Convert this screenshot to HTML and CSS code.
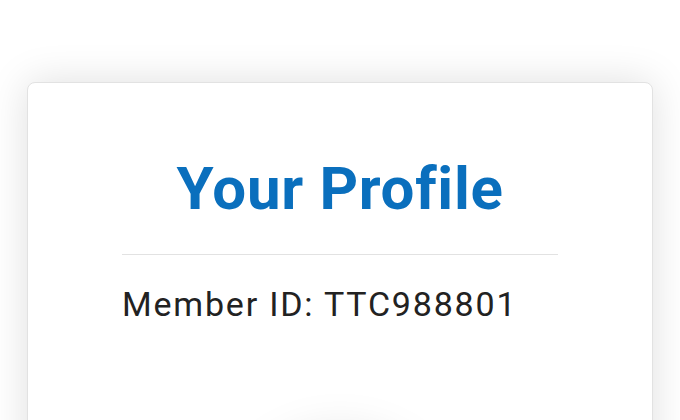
FILE: index.html
```html
<!DOCTYPE html>
<html lang="en">
<head>
    <meta charset="UTF-8">
    <meta name="viewport" content="width=device-width, initial-scale=1.0">
    <title>Your Profile</title>
    <link rel="stylesheet" href="styles.css">
</head>
<body>
    <div class="profile-card">
        <h1>Your Profile</h1>
        <div class="divider"></div>
        <p class="member-id">Member ID: TTC988801</p>
        <div class="avatar"></div>
    </div>
</body>
</html>
```

FILE: styles.css
```css
* {
    margin: 0;
    padding: 0;
    box-sizing: border-box;
}

body {
    font-family: Roboto, 'Liberation Sans', sans-serif;
    background-color: #ffffff;
    padding: 82px 27px 40px 27px;
}

.profile-card {
    background-color: white;
    border: 1px solid #e2e2e2;
    border-radius: 8px;
    box-shadow: 0 0 40px rgba(0, 0, 0, 0.13);
    padding: 71px 94px 40px;
    display: flex;
    flex-direction: column;
    align-items: stretch;
}

h1 {
    color: #0a6fbd;
    text-align: center;
    font-size: 60px;
    font-weight: 700;
    line-height: 70px;
    letter-spacing: 0.7px;
}

.divider {
    height: 1px;
    background-color: #e2e2e2;
    margin-top: 30px;
}

.member-id {
    margin-top: 28px;
    font-size: 34px;
    line-height: 42px;
    color: #222;
    letter-spacing: 1.8px;
}

.avatar {
    align-self: center;
    width: 200px;
    height: 200px;
    margin-top: 113px;
    border-radius: 50%;
    background-color: white;
    box-shadow: 0 0 50px rgba(0, 0, 0, 0.15);
}
```
